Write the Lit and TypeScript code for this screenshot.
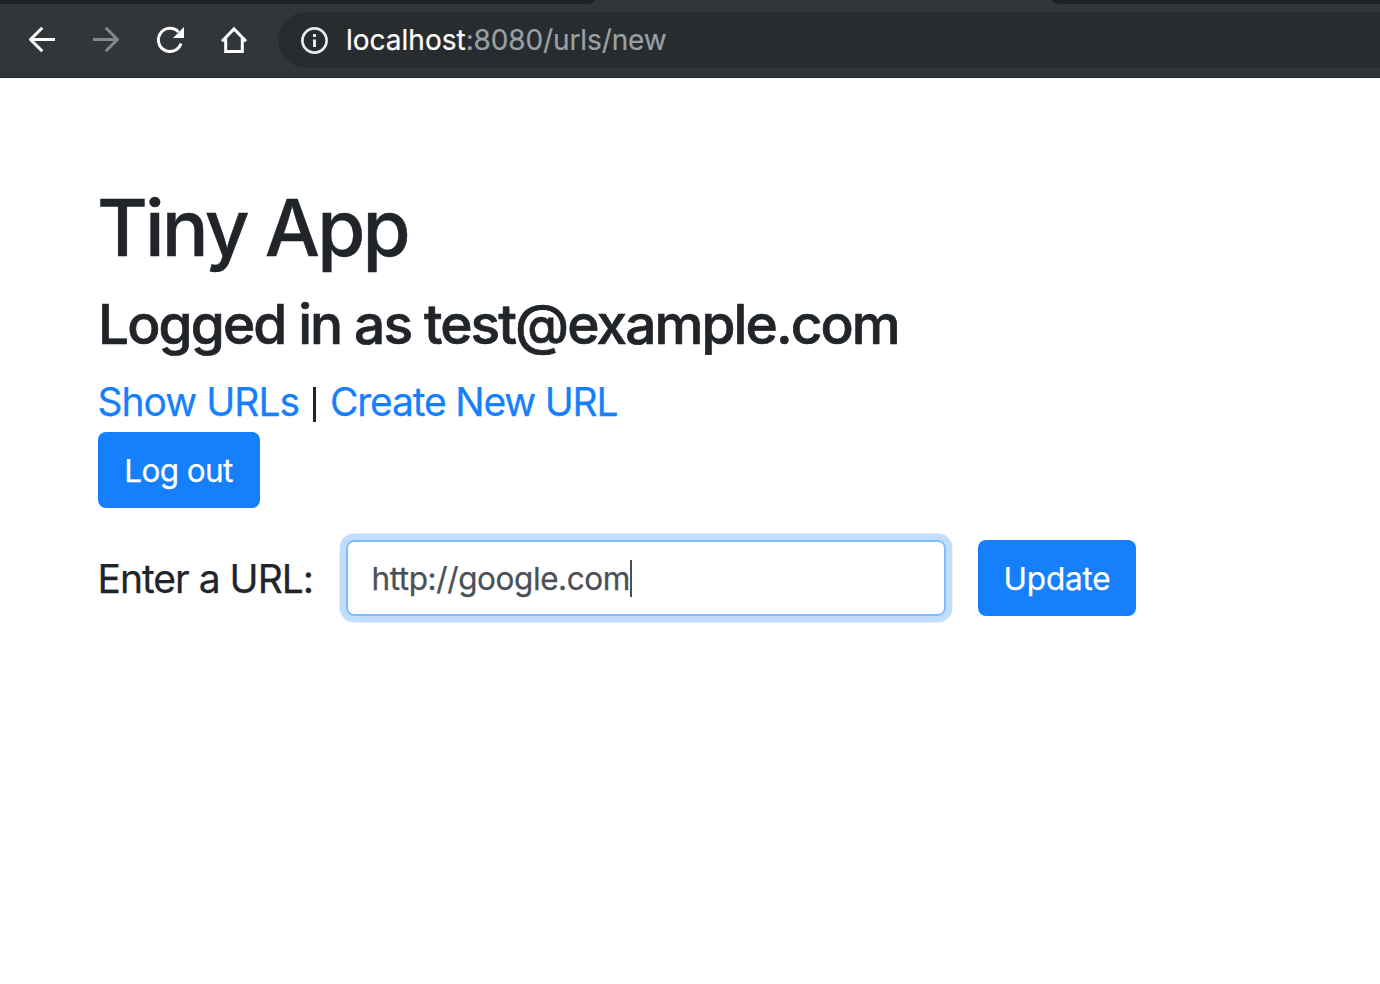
import { LitElement, html, css } from "lit";
import { customElement, property } from "lit/decorators.js";

@customElement("browser-bar")
class BrowserBar extends LitElement {
  static styles = css`
    :host { display: block; height: 78px; box-sizing: border-box; background: #333639; border-bottom: 1px solid #242528; font-family: Inter, "Liberation Sans", sans-serif; overflow: hidden; }
    .tabs { display: flex; justify-content: space-between; height: 4px; }
    .strip { background: #202124; height: 4px; }
    .left { width: 595px; border-bottom-right-radius: 9px 4px; }
    .right { width: 328px; border-bottom-left-radius: 9px 4px; }
    .tools { display: flex; height: 56px; margin-top: 8px; }
    .icons { display: flex; width: 278px; flex: none; align-items: center; padding-left: 22px; gap: 24px; box-sizing: border-box; }
    svg { display: block; width: 40px; height: 40px; flex: none; }
    .omnibox { display: flex; flex: 1; align-items: center; background: #292c2f; border-radius: 28px 0 0 28px; padding-left: 16px; }
    .address { font-size: 28px; line-height: 56px; color: #9aa0a6; margin-left: 12px; letter-spacing: -0.12px; white-space: nowrap; -webkit-text-stroke: 0.2px currentColor; }
    .host { color: #fff; letter-spacing: 0; }
  `;
  render() {
    return html`
      <div class="tabs"><div class="strip left"></div><div class="strip right"></div></div>
      <div class="tools">
        <div class="icons">
          <svg viewBox="22 20 40 40" fill="none" stroke="#fff" stroke-width="3" stroke-linejoin="round"><path d="M55 39.5H31M42.3 27.7L30.5 39.5L42.3 51.3"/></svg>
          <svg viewBox="86 20 40 40" fill="none" stroke="#85878a" stroke-width="3" stroke-linejoin="round"><path d="M93 39.5H117.5L105.7 27.7M117.5 39.5L105.7 51.3"/></svg>
          <svg viewBox="150 20 40 40"><path d="M178.5 32A11.6 11.6 0 1 0 181 43.6" fill="none" stroke="#fff" stroke-width="3"/><path d="M184 27V38H173Z" fill="#fff"/></svg>
          <svg viewBox="214 20 40 40" fill="none" stroke="#fff" stroke-width="3"><path d="M222 41.2L234 29L246 41.2M225.7 38.5V51.5H242.3V38.5"/></svg>
        </div>
        <div class="omnibox">
          <svg viewBox="294 20 40 40"><circle cx="314.5" cy="40.5" r="12.1" fill="none" stroke="#e8eaed" stroke-width="2.7"/><path d="M313 34h3v3h-3zM313 39.5h3v7.5h-3z" fill="#e8eaed"/></svg>
          <div class="address"><span class="host">localhost</span>:8080/urls/new</div>
        </div>
      </div>`;
  }
}

@customElement("app-root")
class AppRoot extends LitElement {
  @property() email = "test@example.com";
  @property() url = "http://google.com";
  static styles = css`
    :host { display: block; height: 984px; overflow: hidden; background: #fff; color: #212529; font-family: Inter, "Liberation Sans", sans-serif; }
    main { padding: 102px 98px 0; }
    h1, h2 { margin: 0; white-space: nowrap; font-weight: 500; }
    h1 { font-size: 78px; line-height: 96px; letter-spacing: -2.85px; margin-left: -1px; -webkit-text-stroke: 0.4px currentColor; }
    h2 { font-size: 55px; line-height: 66px; letter-spacing: -1.9px; margin: 15px 0; -webkit-text-stroke: 0.7px currentColor; }
    nav { display: flex; font-size: 39px; line-height: 60px; white-space: nowrap; }
    a, label, button, .field { -webkit-text-stroke: 0.25px currentColor; }
    a { color: #167ffc; text-decoration: none; }
    .show { width: 215.5px; letter-spacing: -0.98px; margin-left: -0.5px; }
    .sep { width: 3px; height: 35px; background: #212529; margin-top: 15px; flex: none; }
    .create { letter-spacing: -1.2px; margin-left: 14px; }
    button { display: block; height: 76px; border: 0; border-radius: 8px; background: #167ffc; color: #fff; padding: 2px 0 0; font: 400 31.5px/74px Inter, "Liberation Sans", sans-serif; text-align: center; }
    .logout { width: 162px; letter-spacing: -0.6px; padding-right: 1px; }
    .update { width: 158px; letter-spacing: -0.2px; margin-left: 32px; }
    .row { display: flex; margin-top: 32px; }
    label { width: 248.5px; margin-left: -0.5px; font-size: 39px; line-height: 77px; letter-spacing: -1px; white-space: nowrap; }
    .field { display: flex; align-items: center; box-sizing: border-box; width: 600px; height: 76px; border: 2px solid #80bdff; border-radius: 8px; box-shadow: 0 0 0 6.4px #c2deff; padding-left: 23.5px; color: #495057; font-size: 31.5px; letter-spacing: -0.41px; }
    .caret { width: 2px; height: 37px; background: #495057; }
  `;
  render() {
    return html`
      <browser-bar></browser-bar>
      <main>
        <h1>Tiny App</h1>
        <h2>Logged in as ${this.email}</h2>
        <nav><a class="show">Show URLs</a><span class="sep"></span><a class="create">Create New URL</a></nav>
        <button class="logout">Log out</button>
        <div class="row">
          <label>Enter a URL:</label>
          <div class="field"><span>${this.url}</span><span class="caret"></span></div>
          <button class="update">Update</button>
        </div>
      </main>`;
  }
}
